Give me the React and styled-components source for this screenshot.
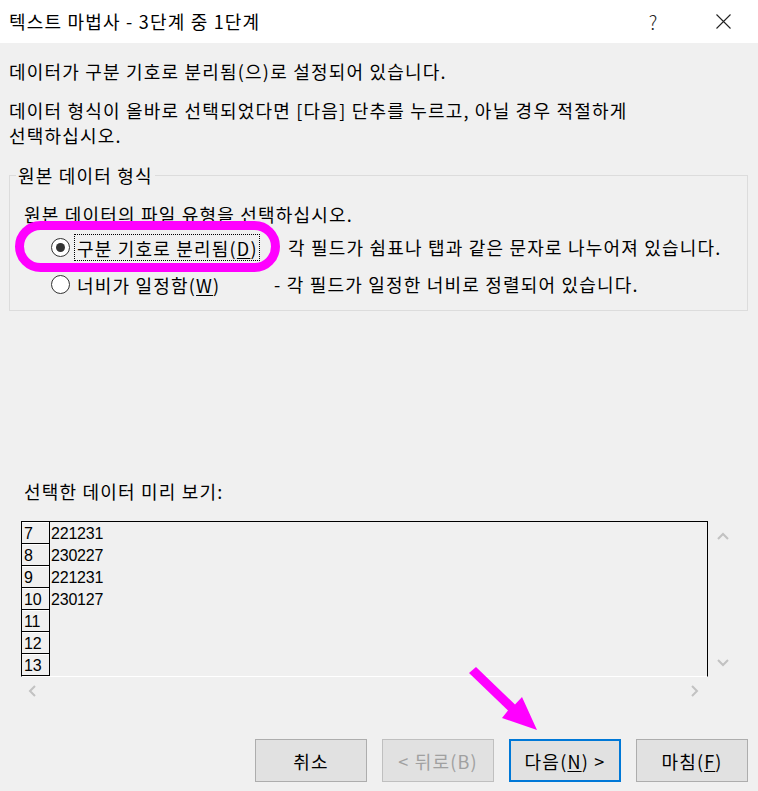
import React from "react";
import styled, { createGlobalStyle } from "styled-components";

const Global = createGlobalStyle`
  html, body { margin: 0; padding: 0; background: #f0f0f0; }
  body { font-family: "Noto Sans CJK KR", "Noto Sans", sans-serif; color: #000; }
  * { box-sizing: border-box; }
`;

const Window = styled.div`
  position: relative;
  width: 758px;
  height: 791px;
  background: #f0f0f0;
  display: flex;
  flex-direction: column;
  overflow: hidden;
  font-size: 18px;
  letter-spacing: 1.2px;
`;

const TitleBar = styled.div`
  height: 43px;
  background: #fff;
  display: flex;
  align-items: center;
  padding-left: 9px;
`;

const Title = styled.div`
  flex: 1;
  font-size: 18px;
  line-height: 1;
  padding-bottom: 2px;
`;

const TitleButton = styled.div`
  width: 70px;
  height: 43px;
  display: flex;
  align-items: center;
  justify-content: center;
  font-size: 19px;
  font-weight: 300;
  color: #222;
  letter-spacing: 0;
`;

const Body = styled.div`
  flex: 1;
  display: flex;
  flex-direction: column;
  padding: 16px 10px 9px 9px;
`;

const Para = styled.p`
  margin: 0 0 ${(p) => p.$gap || 0}px;
  line-height: 25px;
`;

const Group = styled.fieldset`
  margin: 15px 0 0;
  padding: 0 0 12px 14px;
  border: 1px solid #dcdcdc;
  min-width: 0;
`;

const Legend = styled.legend`
  margin-left: -8px;
  padding: 0 2px;
  line-height: 25px;
`;

const Instruction = styled.div`
  margin-top: 14px;
  line-height: 25px;
`;

const RadioRow = styled.div`
  display: flex;
  align-items: center;
  height: 27px;
  margin-top: ${(p) => p.$gap}px;
  padding-left: 27px;
`;

const RadioCell = styled.div`
  width: ${(p) => p.$w}px;
  display: flex;
  align-items: center;
  flex-shrink: 0;
`;

const RadioCircle = styled.span`
  width: 19px;
  height: 19px;
  border-radius: 50%;
  border: 1px solid #333;
  background: #fff;
  display: flex;
  align-items: center;
  justify-content: center;
  flex-shrink: 0;
  &::after {
    content: "";
    width: 9px;
    height: 9px;
    border-radius: 50%;
    background: ${(p) => (p.$checked ? "#333" : "transparent")};
  }
`;

const RadioLabel = styled.span`
  margin-left: 4px;
  height: 27px;
  display: flex;
  align-items: center;
  padding: 0 1px 0 2px;
  border: 1px dotted ${(p) => (p.$focus ? "#000" : "transparent")};
  white-space: nowrap;
`;

const Description = styled.span`
  white-space: nowrap;
  line-height: 25px;
`;

const U = styled.u`
  text-decoration: underline;
  text-underline-offset: 2px;
`;

const PreviewLabel = styled.div`
  margin: 168px 0 0 15px;
  line-height: 25px;
`;

const Preview = styled.div`
  margin: 17px 0 0 12px;
  display: grid;
  grid-template-columns: 687px 29px;
  grid-template-rows: 156px 28px;
`;

const PreviewBox = styled.div`
  border: 1px solid #000;
  border-bottom-color: #fff;
  display: flex;
  flex-direction: column;
  overflow: hidden;
`;

const DataRow = styled.div`
  display: flex;
  height: 22px;
  flex-shrink: 0;
  font-family: "Liberation Sans", Arial, sans-serif;
  font-size: 16px;
  letter-spacing: -0.2px;
  line-height: 1;
`;

const NumCell = styled.div`
  width: 28px;
  border-right: 1px solid #000;
  border-bottom: 1px solid #000;
  box-shadow: inset 0 1px 0 #fff;
  display: flex;
  align-items: flex-end;
  padding: 0 0 1px 2px;
  flex-shrink: 0;
`;

const DataCell = styled.div`
  flex: 1;
  display: flex;
  align-items: flex-end;
  padding: 0 0 2px 1px;
`;

const ScrollV = styled.div`
  display: flex;
  flex-direction: column;
  align-items: center;
  justify-content: space-between;
  padding: 11px 0 10px;
`;

const ScrollH = styled.div`
  display: flex;
  align-items: center;
  justify-content: space-between;
  padding: 0 9px 1px 7px;
`;

const Spacer = styled.div``;

const ButtonRow = styled.div`
  margin-top: auto;
  display: flex;
  justify-content: flex-end;
  gap: 15px;
`;

const Button = styled.div`
  width: 112px;
  height: 43px;
  background: #e1e1e1;
  border: ${(p) => (p.$default ? "2px solid #0078d7" : p.$disabled ? "1px solid #bfbfbf" : "1px solid #adadad")};
  color: ${(p) => (p.$disabled ? "#a0a0a0" : "#000")};
  display: flex;
  align-items: center;
  justify-content: center;
  font-size: 18px;
  white-space: pre;
`;

const Oval = styled.div`
  position: absolute;
  left: 15px;
  top: 221px;
  width: 265px;
  height: 51px;
  border: 9px solid #ff00ff;
  border-radius: 26px;
  pointer-events: none;
`;

const ArrowSvg = styled.svg`
  position: absolute;
  left: 460px;
  top: 655px;
  pointer-events: none;
`;

const Chevron = ({ dir }) => {
  const pts = {
    up: "1,7 6,2 11,7",
    down: "1,2 6,7 11,2",
    left: "7,1 2,6 7,11",
    right: "2,1 7,6 2,11",
  }[dir];
  const vertical = dir === "up" || dir === "down";
  return (
    <svg width={vertical ? 12 : 9} height={vertical ? 9 : 12} viewBox={vertical ? "0 0 12 9" : "0 0 9 12"}>
      <polyline points={pts} fill="none" stroke="#c2c2c2" strokeWidth="2" />
    </svg>
  );
};

const rows = [
  ["7", "221231"],
  ["8", "230227"],
  ["9", "221231"],
  ["10", "230127"],
  ["11", ""],
  ["12", ""],
  ["13", ""],
];

export default function App() {
  return (
    <>
      <Global />
      <Window>
        <TitleBar>
          <Title>텍스트 마법사 - 3단계 중 1단계</Title>
          <TitleButton>?</TitleButton>
          <TitleButton>
            <svg width="15" height="15" viewBox="0 0 15 15">
              <path d="M0.5 0.5 L14.5 14.5 M14.5 0.5 L0.5 14.5" stroke="#222" strokeWidth="1.1" fill="none" />
            </svg>
          </TitleButton>
        </TitleBar>
        <Body>
          <Para $gap={14}>데이터가 구분 기호로 분리됨(으)로 설정되어 있습니다.</Para>
          <Para>
            데이터 형식이 올바로 선택되었다면 [다음] 단추를 누르고, 아닐 경우 적절하게
            <br />
            선택하십시오.
          </Para>
          <Group>
            <Legend>원본 데이터 형식</Legend>
            <Instruction>원본 데이터의 파일 유형을 선택하십시오.</Instruction>
            <RadioRow $gap={7}>
              <RadioCell $w={237}>
                <RadioCircle $checked />
                <RadioLabel $focus>
                  구분 기호로 분리됨(<U>D</U>)
                </RadioLabel>
              </RadioCell>
              <Description>각 필드가 쉼표나 탭과 같은 문자로 나누어져 있습니다.</Description>
            </RadioRow>
            <RadioRow $gap={10}>
              <RadioCell $w={223}>
                <RadioCircle />
                <RadioLabel>
                  너비가 일정함(<U>W</U>)
                </RadioLabel>
              </RadioCell>
              <Description>- 각 필드가 일정한 너비로 정렬되어 있습니다.</Description>
            </RadioRow>
          </Group>
          <PreviewLabel>선택한 데이터 미리 보기:</PreviewLabel>
          <Preview>
            <PreviewBox>
              {rows.map(([n, v]) => (
                <DataRow key={n}>
                  <NumCell>{n}</NumCell>
                  <DataCell>{v}</DataCell>
                </DataRow>
              ))}
            </PreviewBox>
            <ScrollV>
              <Chevron dir="up" />
              <Chevron dir="down" />
            </ScrollV>
            <ScrollH>
              <Chevron dir="left" />
              <Chevron dir="right" />
            </ScrollH>
            <Spacer />
          </Preview>
          <ButtonRow>
            <Button>취소</Button>
            <Button $disabled>{"< 뒤로(B)"}</Button>
            <Button $default>
              다음(<U>N</U>) {">"}
            </Button>
            <Button>
              마침(<U>F</U>)
            </Button>
          </ButtonRow>
        </Body>
        <Oval />
        <ArrowSvg width="90" height="90" viewBox="0 0 90 90">
          <polygon
            points="16,12 55,49.5 62,42 77,75 42,63 48,55.5 9,18"
            fill="#ff00ff"
          />
        </ArrowSvg>
      </Window>
    </>
  );
}
